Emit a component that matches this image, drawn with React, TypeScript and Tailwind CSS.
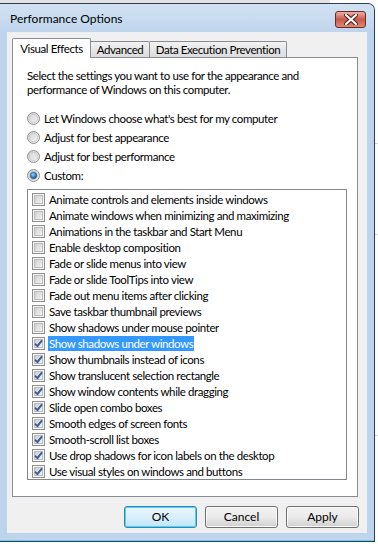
import React from "react";

type Item = { label: string; checked: boolean; selected?: boolean };

const items: Item[] = [
  { label: "Animate controls and elements inside windows", checked: false },
  { label: "Animate windows when minimizing and maximizing", checked: false },
  { label: "Animations in the taskbar and Start Menu", checked: false },
  { label: "Enable desktop composition", checked: false },
  { label: "Fade or slide menus into view", checked: false },
  { label: "Fade or slide ToolTips into view", checked: false },
  { label: "Fade out menu items after clicking", checked: false },
  { label: "Save taskbar thumbnail previews", checked: false },
  { label: "Show shadows under mouse pointer", checked: false },
  { label: "Show shadows under windows", checked: true, selected: true },
  { label: "Show thumbnails instead of icons", checked: true },
  { label: "Show translucent selection rectangle", checked: true },
  { label: "Show window contents while dragging", checked: true },
  { label: "Slide open combo boxes", checked: true },
  { label: "Smooth edges of screen fonts", checked: true },
  { label: "Smooth-scroll list boxes", checked: true },
  { label: "Use drop shadows for icon labels on the desktop", checked: true },
  { label: "Use visual styles on windows and buttons", checked: true },
];

const radios = [
  { label: "Let Windows choose what's best for my computer", on: false },
  { label: "Adjust for best appearance", on: false },
  { label: "Adjust for best performance", on: false },
  { label: "Custom:", on: true },
];

function Radio({ on }: { on: boolean }) {
  return (
    <svg width="13" height="13" viewBox="0 0 13 13" className="shrink-0">
      <defs>
        <linearGradient id="rbg" x1="0" y1="0" x2="1" y2="1">
          <stop offset="0" stopColor="#d2d2d2" />
          <stop offset="1" stopColor="#f6f6f6" />
        </linearGradient>
        <radialGradient id="rdot" cx="0.4" cy="0.35" r="0.7">
          <stop offset="0" stopColor="#8fd8ff" />
          <stop offset="0.6" stopColor="#2a86cc" />
          <stop offset="1" stopColor="#0d4a86" />
        </radialGradient>
      </defs>
      <circle cx="6.5" cy="6.5" r="6" fill="url(#rbg)" stroke="#8e8f8f" />
      <circle cx="6.5" cy="6.5" r="4.2" fill="none" stroke="#c4c4c4" strokeWidth="0.8" />
      {on && <circle cx="6.5" cy="6.5" r="3.2" fill="url(#rdot)" stroke="#1b4a78" strokeWidth="0.6" />}
    </svg>
  );
}

function Check({ on }: { on: boolean }) {
  return (
    <svg width="13" height="13" viewBox="0 0 13 13" className="shrink-0">
      <defs>
        <linearGradient id="cbg" x1="0" y1="0" x2="1" y2="1">
          <stop offset="0" stopColor="#cbcbcb" />
          <stop offset="1" stopColor="#f7f7f7" />
        </linearGradient>
      </defs>
      <rect x="0.5" y="0.5" width="12" height="12" fill="#f4f4f4" stroke="#8e8f8f" />
      <rect x="2.5" y="2.5" width="8" height="8" fill="url(#cbg)" stroke="#bcbcbc" />
      {on && (
        <path d="M3 6.6 L5.4 9.2 L10 3.3" fill="none" stroke="#3b5a9c" strokeWidth="1.9" strokeLinejoin="round" />
      )}
    </svg>
  );
}

function Button({ label, primary }: { label: string; primary?: boolean }) {
  return (
    <div
      className={
        "w-[73px] h-[22px] rounded-[3px] border flex items-center justify-center text-[12px] text-black bg-gradient-to-b " +
        (primary
          ? "border-[#3c7fb1] from-[#eaf6fd] via-[#d9f0fc] to-[#bee6fd] shadow-[inset_0_0_0_1px_#48d7fb]"
          : "border-[#707070] from-[#f2f2f2] via-[#ebebeb] to-[#cfcfcf] shadow-[inset_0_0_0_1px_#fcfcfc]")
      }
    >
      {label}
    </div>
  );
}

export default function App() {
  return (
    <div className="w-[378px] h-[544px] bg-white flex flex-col overflow-hidden font-['Lato',sans-serif]">
      <div className="h-[3px] flex shrink-0">
        <div className="w-[330px] bg-[#e4e4e4]" />
      </div>
      <div className="flex shrink-0">
        {/* window */}
        <div className="w-[375px] h-[539px] border-t border-r border-b border-[#2f3e50] rounded-tr-[7px] bg-[#bed4ec] flex flex-col">
          {/* title bar */}
          <div className="h-[28px] flex items-center pl-[10px] pr-[8px] bg-gradient-to-b from-[#d2e2f4] to-[#bfd5ec] rounded-tr-[6px] shrink-0">
            <span className="text-[12px] text-black flex-1 mt-[2px]">Performance Options</span>
            <div className="w-[31px] h-[17px] mt-[2px] rounded-[3px] border border-[#6b2b24] bg-gradient-to-b from-[#eab0a4] via-[#c9574a] to-[#d98b73] flex items-center justify-center">
              <svg width="14" height="11" viewBox="0 0 14 11">
                <path d="M2 1 L12 10 M12 1 L2 10" stroke="#4a1a14" strokeWidth="4" strokeLinecap="round" />
                <path d="M2 1 L12 10 M12 1 L2 10" stroke="#ffffff" strokeWidth="2.2" strokeLinecap="round" />
              </svg>
            </div>
          </div>
          {/* body */}
          <div className="flex-1 flex pl-[7px] pr-[6px]">
            <div className="w-[360px] h-[501px] bg-[#f0f0f0] pl-[5px] pr-[9px] pt-[6px] flex flex-col text-[11.5px] tracking-[-0.4px] text-black">
              {/* tabs */}
              <div className="h-[19px] flex items-end shrink-0 whitespace-nowrap">
                <div className="w-[79px] h-[20px] -mb-[1px] relative z-10 bg-white border-t border-x border-[#898c95] rounded-t-[2px] flex items-center justify-center">
                  Visual Effects
                </div>
                <div className="w-[59px] h-[16px] border-t border-r border-[#898c95] rounded-tr-[2px] bg-gradient-to-b from-[#f2f2f2] to-[#dcdcdc] flex items-center justify-center">
                  Advanced
                </div>
                <div className="w-[137px] h-[16px] border-t border-r border-[#898c95] rounded-tr-[2px] bg-gradient-to-b from-[#f2f2f2] to-[#dcdcdc] flex items-center justify-center">
                  Data Execution Prevention
                </div>
              </div>
              {/* panel */}
              <div className="h-[440px] bg-white border border-[#898c95] pl-[14px] pt-[11px] flex flex-col">
                <p className="leading-[14px] w-[325px]">
                  Select the settings you want to use for the appearance and performance of Windows on this computer.
                </p>
                <div className="mt-[12px] flex flex-col">
                  {radios.map((r) => (
                    <div key={r.label} className="h-[19px] flex items-center gap-[4px]">
                      <Radio on={r.on} />
                      <span>{r.label}</span>
                    </div>
                  ))}
                </div>
                <div className="mt-[4px] w-[320px] h-[291px] border border-[#828790] pt-[1px] pl-[4px] flex flex-col">
                  {items.map((it) => (
                    <div key={it.label} className="h-[16px] flex items-center gap-[3px] whitespace-nowrap">
                      <Check on={it.checked} />
                      <span
                        className={
                          "h-[15px] leading-[15px] px-[1px] " +
                          (it.selected ? "bg-[#3399ff] text-white" : "")
                        }
                      >
                        {it.label}
                      </span>
                    </div>
                  ))}
                </div>
              </div>
              {/* buttons */}
              <div className="mt-[9px] flex justify-end gap-[8px] -mr-[1px] tracking-normal">
                <Button label="OK" primary />
                <Button label="Cancel" />
                <Button label="Apply" />
              </div>
            </div>
          </div>
          <div className="h-[6px] shrink-0" />
          <div className="h-[1px] bg-[#5fd3f0] shrink-0" />
        </div>
        {/* background app peeking at right */}
        <div className="flex-1 flex flex-col overflow-hidden">
          <div className="h-[140px]" />
          <div className="h-px bg-[#d8d8d8]" />
          <div className="h-[90px]" />
          <div className="h-px bg-[#d8d8d8]" />
          <div className="h-[200px]" />
          <div className="h-px bg-[#d8d8d8]" />
        </div>
      </div>
      <div className="flex-1 bg-white" />
    </div>
  );
}
